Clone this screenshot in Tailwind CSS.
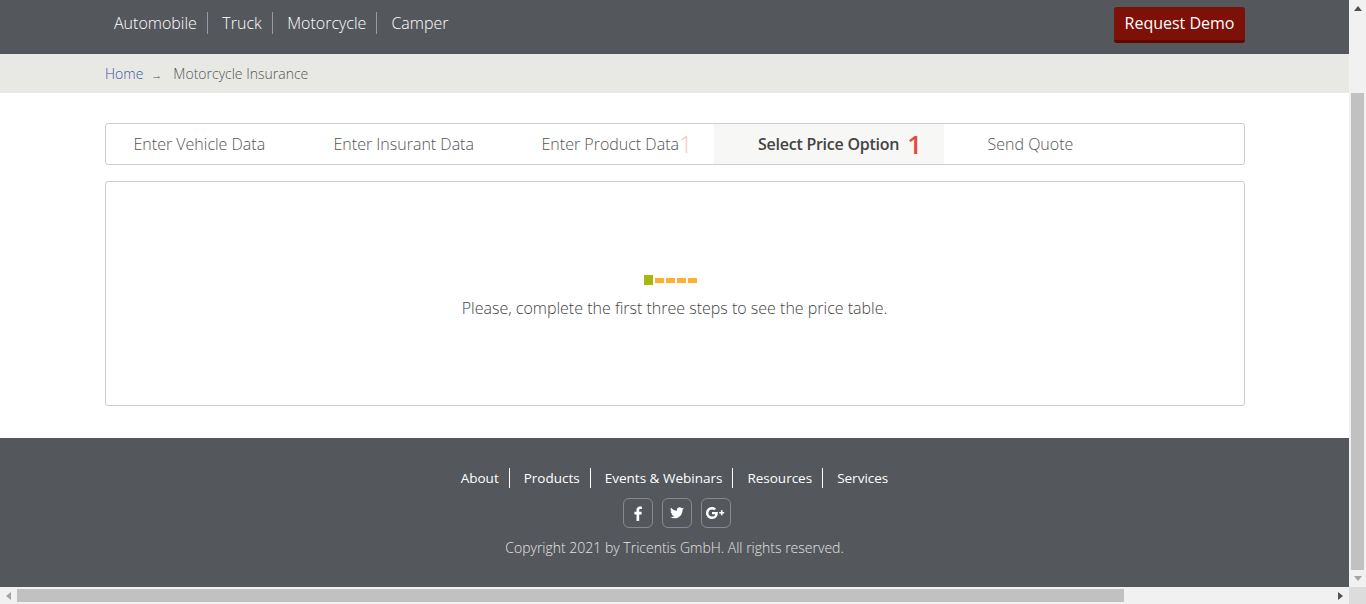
<!DOCTYPE html>
<html lang="en">
<head>
<meta charset="utf-8">
<title>Motorcycle Insurance</title>
<script src="https://cdn.jsdelivr.net/npm/@tailwindcss/browser@4"></script>
</head>
<body class="h-[604px] w-[1366px] overflow-hidden bg-white font-['Open_Sans',sans-serif]">
<div class="grid h-[604px] w-[1366px] grid-cols-[1349px_17px] grid-rows-[587px_17px]">
  <main class="flex min-w-0 flex-col overflow-hidden">
    <header class="h-[54px] shrink-0 bg-[#54575c]">
      <div class="mx-auto flex h-[54px] w-[1140px] items-start justify-between">
        <nav class="flex pt-3 pl-[9.500px] text-base leading-[22px] font-light text-white">
          <a class="border-r border-white/40 pr-[10px]">Automobile</a>
          <a class="border-r border-white/40 pr-[10.500px] pl-[14.500px]">Truck</a>
          <a class="border-r border-white/40 pr-[10px] pl-[14px]">Motorcycle</a>
          <a class="pl-[14px]">Camper</a>
        </nav>
        <a class="mt-[7px] flex h-9 w-[131px] items-center justify-center rounded-[3px] border-b-[3px] border-[#5e0800] bg-[#7d1007] pb-[2px] pl-[1px] text-base text-white">Request Demo</a>
      </div>
    </header>
    <div class="h-[39px] shrink-0 bg-[#e8e9e4]">
      <div class="mx-auto flex h-[39px] w-[1140px] items-center text-sm font-light">
        <a class="pl-[0.500px] text-[#3f51a8]">Home</a>
        <span class="ml-[8px] w-[22px] pt-[2px] text-[11px] text-[#555]">→</span>
        <span class="text-[#555]">Motorcycle Insurance</span>
      </div>
    </div>
    <section class="flex flex-1 flex-col items-center pt-[30px]">
      <div class="flex h-[42px] w-[1140px] shrink-0 items-stretch rounded-[3px] border border-[#ccc] text-base font-light text-[#555]">
        <a class="flex w-[204px] items-center pl-[28px]">Enter Vehicle Data</a>
        <a class="flex w-[208px] items-center pl-[24px]">Enter Insurant Data</a>
        <a class="flex w-[196px] items-center whitespace-nowrap pl-[24px]">Enter Product Data<span class="text-2xl font-light text-[#f5c6c4]">1</span></a>
        <a class="flex w-[230px] items-center whitespace-nowrap bg-[#f7f7f6] pl-[44px] font-semibold tracking-[-0.250px] text-[#444]"><span class="pl-[0.500px]">Select Price Option</span><span class="ml-2 text-[26px] font-semibold text-[#e04b45]">1</span></a>
        <a class="flex items-center pl-[44px]">Send Quote</a>
      </div>
      <div class="mt-4 flex h-[225px] w-[1140px] shrink-0 flex-col items-center rounded-[3px] border border-[#ccc] pt-[93px]">
        <div class="mr-2 flex h-[10px] items-center gap-[2px]">
          <span class="h-[10px] w-[9px] bg-[#a5b80e]"></span>
          <span class="h-[5px] w-[9px] bg-[#ffb02e]"></span>
          <span class="h-[5px] w-[9px] bg-[#ffb02e]"></span>
          <span class="h-[5px] w-[9px] bg-[#ffb02e]"></span>
          <span class="h-[5px] w-[9px] bg-[#ffb02e]"></span>
        </div>
        <p class="mt-[12px] text-base leading-[22px] font-light text-[#444]">Please, complete the first three steps to see the price table.</p>
      </div>
    </section>
    <footer class="flex h-[149px] shrink-0 flex-col items-center bg-[#54575c] pt-[30px] text-white">
      <nav class="flex text-[13.500px] leading-5">
        <a class="border-r border-white pr-[10px]">About</a>
        <a class="border-r border-white pr-[10px] pl-[14px]">Products</a>
        <a class="border-r border-white pr-[10px] pl-[14px]">Events &amp; Webinars</a>
        <a class="border-r border-white pr-[10px] pl-[14px]">Resources</a>
        <a class="pl-[14px]">Services</a>
      </nav>
      <div class="mt-[10px] ml-1 flex gap-[9px]">
        <a class="flex h-[30px] w-[30px] items-center justify-center rounded-[6px] border border-white/30 pl-[1px]">
          <svg width="9" height="15" viewBox="0 0 9 15" fill="#fff"><path d="M2.5 15V8.400H.4V5.800h2.100V3.900C2.500 1.600 3.800.4 5.800.4c1 0 1.800.1 2.100.1v2.400H6.500c-1.100 0-1.300.5-1.300 1.300v1.600h2.600l-.3 2.600H5.200V15z"/></svg>
        </a>
        <a class="flex h-[30px] w-[30px] items-center justify-center rounded-[6px] border border-white/30">
          <svg width="14" height="12" viewBox="0 0 24 20" fill="#fff"><path d="M24 2.400c-.9.4-1.800.7-2.800.8 1-.6 1.800-1.600 2.200-2.700-1 .6-2 1-3.100 1.200C19.300.7 18 0 16.600 0c-2.700 0-4.900 2.200-4.900 4.900 0 .4 0 .8.100 1.100C7.700 5.800 4.100 3.900 1.700.9c-.4.700-.7 1.600-.7 2.500 0 1.700.9 3.200 2.200 4.100-.8 0-1.600-.2-2.200-.6v.1c0 2.400 1.700 4.400 3.900 4.800-.4.100-.8.200-1.300.2-.3 0-.6 0-.9-.1.600 2 2.400 3.400 4.600 3.400-1.700 1.300-3.800 2.100-6.100 2.100-.4 0-.8 0-1.200-.1C2.200 18.300 4.800 19.100 7.500 19.100c9.100 0 14-7.500 14-14v-.6c1-.7 1.800-1.500 2.500-2.100z"/></svg>
        </a>
        <a class="flex h-[30px] w-[30px] items-center justify-center rounded-[6px] border border-white/30">
          <svg width="19" height="12" viewBox="0 0 19 12" fill="#fff"><path d="M6 5v2.300h3.300C9.100 8.700 7.900 9.600 6 9.600 4 9.600 2.400 8 2.400 6S4 2.400 6 2.400c1 0 1.800.3 2.400.9l1.700-1.700C9 .6 7.700 0 6 0 2.700 0 0 2.700 0 6s2.700 6 6 6c3.500 0 5.800-2.400 5.800-5.900 0-.4 0-.8-.1-1.100zM16.500 5V3.300h-1.600V5h-1.700v1.600h1.700v1.700h1.600V6.600h1.700V5z"/></svg>
        </a>
      </div>
      <p class="mt-[10px] text-sm leading-5 font-light text-[#e4e4e4]">Copyright 2021 by Tricentis GmbH. All rights reserved.</p>
    </footer>
  </main>
  <aside class="flex flex-col items-center bg-[#f1f1f1]">
    <div class="flex h-[17px] w-full items-center justify-center">
      <svg width="8" height="5" viewBox="0 0 8 5" fill="#505050"><path d="M4 0l4 5H0z"/></svg>
    </div>
    <div class="mt-[76px] h-[477px] w-[13px] shrink-0 bg-[#c1c1c1]"></div>
    <div class="mt-auto flex h-[17px] w-full items-center justify-center">
      <svg width="8" height="5" viewBox="0 0 8 5" fill="#a3a3a3"><path d="M4 5L8 0H0z"/></svg>
    </div>
  </aside>
  <div class="flex h-[17px] items-center bg-[#f1f1f1]">
    <div class="flex h-[17px] w-[17px] shrink-0 items-center justify-center">
      <svg width="5" height="8" viewBox="0 0 5 8" fill="#a3a3a3"><path d="M0 4l5-4v8z"/></svg>
    </div>
    <div class="h-[13px] w-[1107px] shrink-0 bg-[#c1c1c1]"></div>
    <div class="ml-auto flex h-[17px] w-[17px] shrink-0 items-center justify-center">
      <svg width="5" height="8" viewBox="0 0 5 8" fill="#505050"><path d="M5 4L0 0v8z"/></svg>
    </div>
  </div>
  <div class="bg-[#dcdcdc]"></div>
</div>
</body>
</html>
